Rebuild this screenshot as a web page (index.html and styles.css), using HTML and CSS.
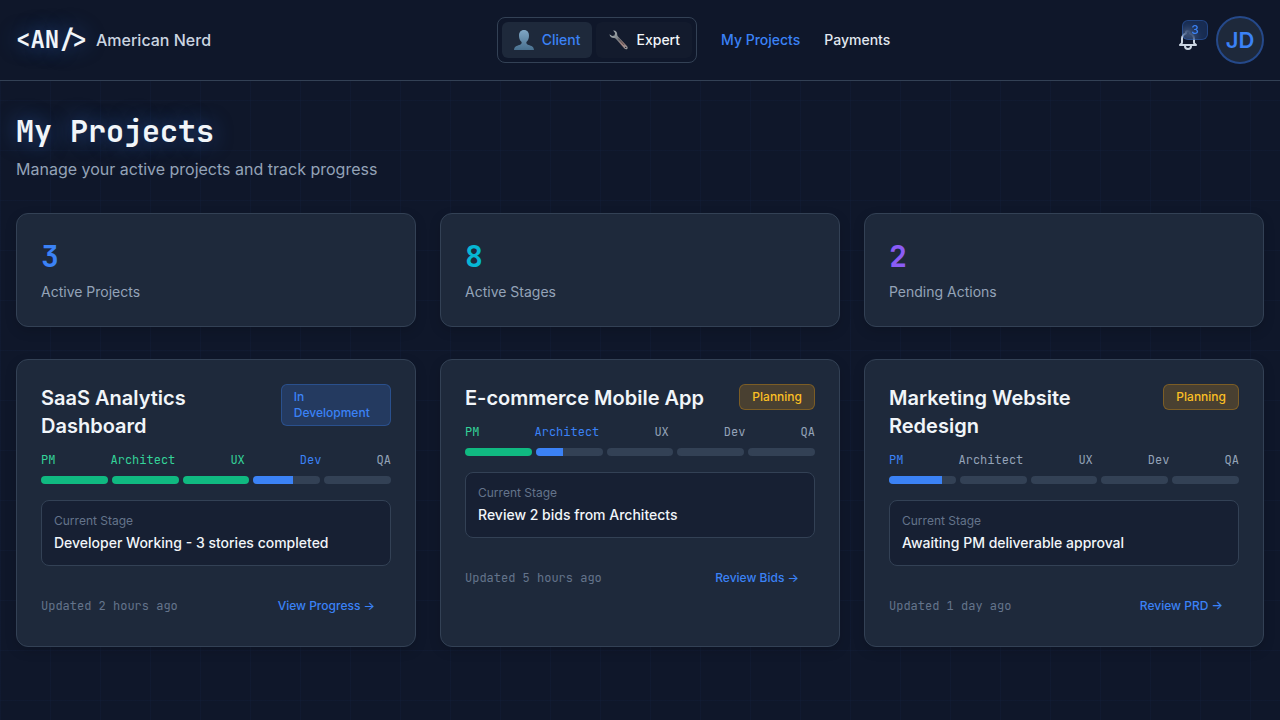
FILE: index.html
```html
<!DOCTYPE html>
<html lang="en">
<head>
<meta charset="utf-8">
<meta name="viewport" content="width=device-width, initial-scale=1">
<title>My Projects - American Nerd</title>
<link rel="stylesheet" href="styles.css">
</head>
<body>
<header class="topbar">
  <a class="brand" href="#"><span class="brand-mark">&lt;AN/&gt;</span><span class="brand-name">American Nerd</span></a>
  <div class="center">
    <div class="switch">
      <button class="role role-active" type="button">
        <svg class="role-icon" viewBox="0 0 20 20" aria-hidden="true">
          <defs><linearGradient id="bust" x1="0" y1="0" x2="0" y2="1"><stop offset="0" stop-color="#7fa6c4"/><stop offset="1" stop-color="#48708f"/></linearGradient></defs>
          <path fill="url(#bust)" d="M10 0C6.700 0 5 2.300 5 5.700c0 2.500.8 4.800 2.600 6.300.3 1.500-.4 2.300-2.200 2.900C2.500 15.800.4 16.300 0 20h20c-.4-3.700-2.500-4.200-5.400-5.100-1.800-.6-2.500-1.400-2.200-2.900C14.200 10.500 15 8.200 15 5.700 15 2.300 13.300 0 10 0z"/>
        </svg>Client</button>
      <button class="role" type="button">
        <svg class="role-icon" viewBox="0 0 20 20" aria-hidden="true">
          <defs><linearGradient id="steel" x1="0" y1="0" x2="1" y2="1"><stop offset="0" stop-color="#b3bdc0"/><stop offset=".5" stop-color="#777b80"/><stop offset=".7" stop-color="#a0807c"/><stop offset="1" stop-color="#9a9da0"/></linearGradient></defs>
          <path fill="url(#steel)" d="M5.200.6C7.800.4 9.400 2.200 9.200 4.600c0 .8.2 1.300.8 1.900l8.900 9.600c.9 1 1 2.100.3 2.800-.7.7-1.900.6-2.800-.3L8 8.900c-.6-.6-1.200-.8-2-.8-2.400.1-4.300-1.500-4.500-3.900l2.600 1.900 2.400-.7.6-2.300z"/>
          <path d="M10.200 8.500l6.200 6.700" stroke="#3c3336" stroke-width=".8"/>
          <circle cx="17.700" cy="17.400" r=".7" fill="#1d2230"/>
        </svg>Expert</button>
    </div>
    <nav class="links"><a class="link link-active" href="#">My Projects</a><a class="link" href="#">Payments</a></nav>
  </div>
  <div class="account">
    <button class="bell" type="button" aria-label="Notifications">
      <svg class="bell-icon" viewBox="0 0 24 24" fill="none" stroke="currentColor" stroke-width="2" stroke-linecap="round" stroke-linejoin="round" aria-hidden="true"><path d="M15 17h5l-1.405-1.405A2.032 2.032 0 0118 14.158V11a6.002 6.002 0 00-4-5.659V5a2 2 0 10-4 0v.341C7.670 6.165 6 8.388 6 11v3.159c0 .538-.214 1.055-.595 1.436L4 17h5m6 0v1a3 3 0 11-6 0v-1m6 0H9"/></svg>
      <span class="count">3</span>
    </button>
    <button class="avatar" type="button">JD</button>
  </div>
</header>

<main class="page">
  <div class="heading">
    <h1 class="title">My Projects</h1>
    <p class="subtitle">Manage your active projects and track progress</p>
  </div>

  <section class="grid">
    <div class="card"><div class="stat blue">3</div><div class="stat-label">Active Projects</div></div>
    <div class="card"><div class="stat cyan">8</div><div class="stat-label">Active Stages</div></div>
    <div class="card"><div class="stat purple">2</div><div class="stat-label">Pending Actions</div></div>
  </section>

  <section class="grid">
    <article class="card">
      <div class="card-head"><h2 class="card-title">SaaS Analytics Dashboard</h2><span class="badge badge-dev">In Development</span></div>
      <div class="steps"><span class="done">PM</span><span class="done">Architect</span><span class="done">UX</span><span class="blue">Dev</span><span>QA</span></div>
      <div class="bars">
        <div class="bar"><div class="fill fill-done" style="width:100%"></div></div>
        <div class="bar"><div class="fill fill-done" style="width:100%"></div></div>
        <div class="bar"><div class="fill fill-done" style="width:100%"></div></div>
        <div class="bar"><div class="fill" style="width:60%"></div></div>
        <div class="bar"></div>
      </div>
      <div class="stage"><div class="stage-label">Current Stage</div><div class="stage-text">Developer Working - 3 stories completed</div></div>
      <div class="card-foot"><span class="updated">Updated 2 hours ago</span><button class="action" type="button">View Progress →</button></div>
    </article>
    <article class="card">
      <div class="card-head"><h2 class="card-title">E-commerce Mobile App</h2><span class="badge badge-plan">Planning</span></div>
      <div class="steps"><span class="done">PM</span><span class="blue">Architect</span><span>UX</span><span>Dev</span><span>QA</span></div>
      <div class="bars">
        <div class="bar"><div class="fill fill-done" style="width:100%"></div></div>
        <div class="bar"><div class="fill" style="width:40%"></div></div>
        <div class="bar"></div>
        <div class="bar"></div>
        <div class="bar"></div>
      </div>
      <div class="stage"><div class="stage-label">Current Stage</div><div class="stage-text">Review 2 bids from Architects</div></div>
      <div class="card-foot"><span class="updated">Updated 5 hours ago</span><button class="action" type="button">Review Bids →</button></div>
    </article>
    <article class="card">
      <div class="card-head"><h2 class="card-title">Marketing Website Redesign</h2><span class="badge badge-plan">Planning</span></div>
      <div class="steps"><span class="blue">PM</span><span>Architect</span><span>UX</span><span>Dev</span><span>QA</span></div>
      <div class="bars">
        <div class="bar"><div class="fill" style="width:80%"></div></div>
        <div class="bar"></div>
        <div class="bar"></div>
        <div class="bar"></div>
        <div class="bar"></div>
      </div>
      <div class="stage"><div class="stage-label">Current Stage</div><div class="stage-text">Awaiting PM deliverable approval</div></div>
      <div class="card-foot"><span class="updated">Updated 1 day ago</span><button class="action" type="button">Review PRD →</button></div>
    </article>
  </section>
</main>
</body>
</html>
```
FILE: styles.css
```css
*, *::before, *::after { box-sizing: border-box; }
body {
  margin: 0;
  min-height: 100vh;
  color: #f1f5f9;
  font: 16px/24px Inter, sans-serif;
  background-color: #0f172a;
  background-image:
    linear-gradient(rgba(59, 130, 246, 0.03) 1px, transparent 1px),
    linear-gradient(90deg, rgba(59, 130, 246, 0.03) 1px, transparent 1px);
  background-size: 50px 50px;
}
h1, h2, p { margin: 0; }
a { color: inherit; text-decoration: none; }
button { margin: 0; padding: 0; border: 0; background: none; color: inherit; font: inherit; cursor: pointer; }

.topbar {
  display: flex;
  align-items: center;
  justify-content: space-between;
  padding: 16px;
  background: #0f172a;
  border-bottom: 1px solid #334155;
}
.brand { display: flex; align-items: center; gap: 8px; }
.brand-mark, .title, .stat, .steps, .updated { font-family: "JetBrains Mono", "DejaVu Sans Mono", monospace; }
.brand-mark { font-size: 24px; line-height: 32px; font-weight: 700; text-shadow: 0 0 20px rgba(59, 130, 246, 0.5); }
.brand-name { color: #cbd5e1; font-weight: 500; }
.center { display: flex; align-items: center; gap: 24px; font-size: 14px; line-height: 20px; font-weight: 500; }
.switch { display: flex; gap: 4px; padding: 4px; border: 1px solid #334155; border-radius: 8px; }
.role { display: flex; align-items: center; gap: 8px; padding: 8px 12px; border-radius: 6px; background: #131b2d; }
.role-active { background: #1e293b; color: #3b82f6; }
.role-icon { width: 20px; height: 20px; }
.links { display: flex; gap: 24px; }
.link { color: #e2e8f0; }
.link-active, .blue { color: #3b82f6; }
.account { display: flex; align-items: center; gap: 16px; }
.bell { position: relative; display: flex; color: #cbd5e1; }
.bell-icon { width: 24px; height: 24px; }
.count {
  position: absolute;
  top: -8px;
  right: -8px;
  width: 26px;
  padding: 1px 0;
  border: 1px solid rgba(59, 130, 246, 0.3);
  border-radius: 6px;
  background: rgba(59, 130, 246, 0.2);
  backdrop-filter: blur(4px);
  color: #3b82f6;
  font-size: 12px;
  line-height: 16px;
  font-weight: 500;
  text-align: center;
}
.avatar {
  width: 48px;
  height: 48px;
  border: 2px solid #25498a;
  border-radius: 50%;
  background: #1e293b;
  color: #3b82f6;
  font-size: 22px;
  line-height: 28px;
  font-weight: 600;
}

.page { display: flex; flex-direction: column; gap: 32px; padding: 32px 16px; }
.heading { display: flex; flex-direction: column; gap: 8px; }
.title { font-size: 30px; line-height: 36px; font-weight: 700; text-shadow: 0 0 20px rgba(59, 130, 246, 0.5); }
.subtitle { color: #94a3b8; }
.grid { display: grid; grid-template-columns: repeat(3, minmax(0, 1fr)); gap: 24px; }
.card {
  padding: 24px;
  border: 1px solid #334155;
  border-radius: 12px;
  background: #1e293b;
  box-shadow: 0 4px 12px rgba(0, 0, 0, 0.15);
}
.stat { font-size: 30px; line-height: 36px; font-weight: 700; }
.cyan { color: #06b6d4; }
.purple { color: #8b5cf6; }
.stat-label { margin-top: 8px; color: #94a3b8; font-size: 14px; line-height: 20px; }

.card-head { display: flex; align-items: flex-start; justify-content: space-between; }
.card-title { font-size: 20px; line-height: 28px; font-weight: 600; }
.badge { padding: 4px 12px; border: 1px solid; border-radius: 6px; font-size: 12px; line-height: 16px; font-weight: 500; }
.badge-dev { color: #3b82f6; background: rgba(59, 130, 246, 0.2); border-color: rgba(59, 130, 246, 0.3); }
.badge-plan { color: #fbbf24; background: rgba(245, 158, 11, 0.2); border-color: rgba(245, 158, 11, 0.3); }
.steps { display: flex; justify-content: space-between; margin-top: 12px; color: #94a3b8; font-size: 12px; line-height: 16px; }
.steps .done { color: #34d399; }
.bars { display: flex; gap: 4px; margin-top: 8px; }
.bar { flex: 1; height: 8px; overflow: hidden; border-radius: 4px; background: #334155; }
.fill { height: 100%; background: #3b82f6; }
.fill-done { background: #10b981; }
.stage { margin-top: 16px; padding: 12px; border: 1px solid #334155; border-radius: 8px; background: #172033; }
.stage-label { margin-bottom: 4px; color: #64748b; font-size: 12px; line-height: 16px; }
.stage-text { font-size: 14px; line-height: 20px; font-weight: 500; }
.card-foot { display: flex; align-items: center; justify-content: space-between; margin-top: 24px; font-size: 12px; line-height: 16px; }
.updated { color: #64748b; }
.action { padding: 8px 16px; color: #3b82f6; font-weight: 500; }
```
